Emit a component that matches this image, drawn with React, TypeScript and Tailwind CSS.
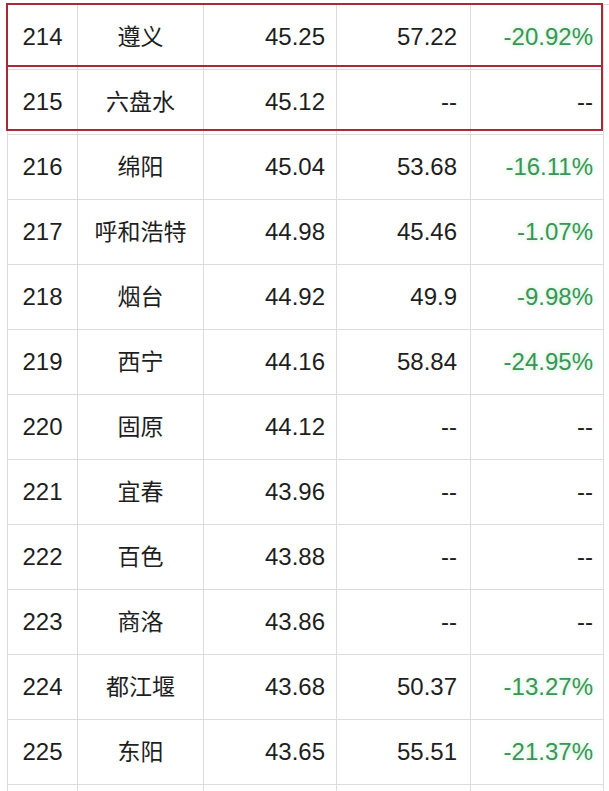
import React from "react";

type Row = [string, string, string, string, string];

const rows: Row[] = [
  ["214", "遵义", "45.25", "57.22", "-20.92%"],
  ["215", "六盘水", "45.12", "--", "--"],
  ["216", "绵阳", "45.04", "53.68", "-16.11%"],
  ["217", "呼和浩特", "44.98", "45.46", "-1.07%"],
  ["218", "烟台", "44.92", "49.9", "-9.98%"],
  ["219", "西宁", "44.16", "58.84", "-24.95%"],
  ["220", "固原", "44.12", "--", "--"],
  ["221", "宜春", "43.96", "--", "--"],
  ["222", "百色", "43.88", "--", "--"],
  ["223", "商洛", "43.86", "--", "--"],
  ["224", "都江堰", "43.68", "50.37", "-13.27%"],
  ["225", "东阳", "43.65", "55.51", "-21.37%"],
  ["", "", "", "", ""],
];

const num = "font-['Liberation_Sans','Arial',sans-serif] text-[24px] text-[#1e1e1e]";

export default function App() {
  return (
    <div className="relative w-[609px] h-[791px] overflow-hidden bg-white">
      <div className="pl-[7px] pt-[4px]">
        <div className="grid grid-cols-[70px_126px_133px_134px_133px] border-l border-t border-[#dcdcdc]">
          {rows.map((r, i) => (
            <React.Fragment key={i}>
              <div className={`h-[65px] border-r border-b border-[#dcdcdc] flex items-center justify-center ${num}`}>
                {r[0]}
              </div>
              <div className="h-[65px] border-r border-b border-[#dcdcdc] flex items-center justify-center pb-[4px] leading-none font-['Noto_Sans_CJK_SC',sans-serif] text-[23px] text-[#1e1e1e]">
                {r[1]}
              </div>
              <div className={`h-[65px] border-r border-b border-[#dcdcdc] flex items-center justify-end pr-[11px] ${num}`}>
                {r[2]}
              </div>
              <div className={`h-[65px] border-r border-b border-[#dcdcdc] flex items-center justify-end pr-[13px] ${num}`}>
                {r[3]}
              </div>
              <div
                className={`h-[65px] border-r border-b border-[#dcdcdc] flex items-center justify-end pr-[10px] ${num} ${
                  r[4].startsWith("-") && r[4] !== "--"
                    ? "!text-[#3b9556] [text-shadow:0_0_5px_rgba(150,230,170,0.7)]"
                    : ""
                }`}
              >
                {r[4]}
              </div>
            </React.Fragment>
          ))}
        </div>
      </div>
      <div className="absolute left-[6px] top-[3px] w-[597px] h-[64px] border-2 border-[#a82a38]" />
      <div className="absolute left-[6px] top-[65px] w-[597px] h-[66px] border-2 border-[#a82a38]" />
    </div>
  );
}
